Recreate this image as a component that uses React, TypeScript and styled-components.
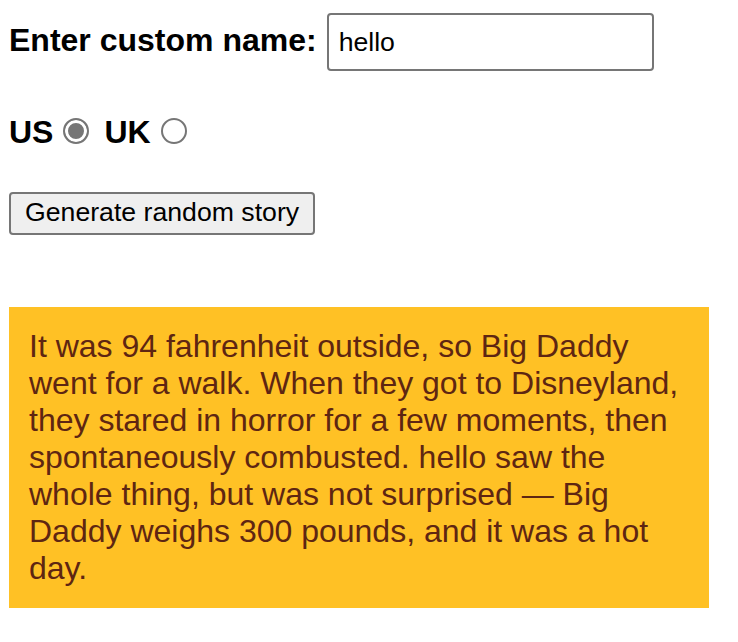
import React, { useState } from "react";
import styled, { createGlobalStyle } from "styled-components";

const GlobalStyle = createGlobalStyle`
  html, body {
    margin: 0;
    padding: 0;
    background: #ffffff;
  }
  body {
    font-family: "Liberation Sans", Arial, Helvetica, sans-serif;
    color: #000000;
  }
`;

const Page = styled.div`
  width: 700px;
  padding: 13px 9px 0 9px;
  display: flex;
  flex-direction: column;
  align-items: flex-start;
`;

const NameRow = styled.div`
  display: flex;
  align-items: baseline;
  gap: 10px;
`;

const Label = styled.label`
  font-size: 32px;
  font-weight: bold;
  line-height: 37px;
`;

const TextInput = styled.input`
  box-sizing: border-box;
  width: 327px;
  height: 58px;
  margin: 0;
  padding: 0 10px;
  border: 2px solid #767676;
  border-radius: 4px;
  font-family: "Liberation Sans", Arial, sans-serif;
  font-size: 26.67px;
  color: #000000;
  background: #ffffff;
  outline: none;
`;

const RadioRow = styled.div`
  display: flex;
  align-items: flex-end;
  margin-top: 43px;
`;

const Radio = styled.input<{ $gapAfter?: boolean }>`
  appearance: none;
  -webkit-appearance: none;
  box-sizing: border-box;
  width: 26px;
  height: 26px;
  margin: 0 ${(p) => (p.$gapAfter ? "15px" : "0")} 7px 10px;
  border: 2px solid #767676;
  border-radius: 50%;
  background: #ffffff;
  flex: none;

  &:checked {
    background: #767676;
    box-shadow: inset 0 0 0 3px #ffffff;
  }
`;

const GenerateButton = styled.button`
  box-sizing: border-box;
  margin-top: 41px;
  height: 43px;
  padding: 0 14px 3px 14px;
  border: 2px solid #767676;
  border-radius: 4px;
  background: #efefef;
  font-family: "Liberation Sans", Arial, sans-serif;
  font-size: 26.67px;
  line-height: 30px;
  color: #000000;
  cursor: pointer;
`;

const Story = styled.p`
  box-sizing: border-box;
  width: 700px;
  margin: 72px 0 0 0;
  padding: 21px 20px;
  background: #ffc125;
  color: #5e2612;
  font-size: 32px;
  line-height: 37px;
`;

export default function App() {
  const [name, setName] = useState("hello");
  const [country, setCountry] = useState("us");

  const story = `It was 94 fahrenheit outside, so Big Daddy went for a walk. When they got to Disneyland, they stared in horror for a few moments, then spontaneously combusted. ${name} saw the whole thing, but was not surprised — Big Daddy weighs 300 pounds, and it was a hot day.`;

  return (
    <>
      <GlobalStyle />
      <Page>
        <NameRow>
          <Label htmlFor="customname">Enter custom name:</Label>
          <TextInput
            id="customname"
            type="text"
            value={name}
            onChange={(e) => setName(e.target.value)}
          />
        </NameRow>
        <RadioRow>
          <Label htmlFor="us">US</Label>
          <Radio
            id="us"
            type="radio"
            name="ukus"
            value="us"
            $gapAfter
            checked={country === "us"}
            onChange={() => setCountry("us")}
          />
          <Label htmlFor="uk">UK</Label>
          <Radio
            id="uk"
            type="radio"
            name="ukus"
            value="uk"
            checked={country === "uk"}
            onChange={() => setCountry("uk")}
          />
        </RadioRow>
        <GenerateButton type="button">Generate random story</GenerateButton>
        <Story>{story}</Story>
      </Page>
    </>
  );
}
